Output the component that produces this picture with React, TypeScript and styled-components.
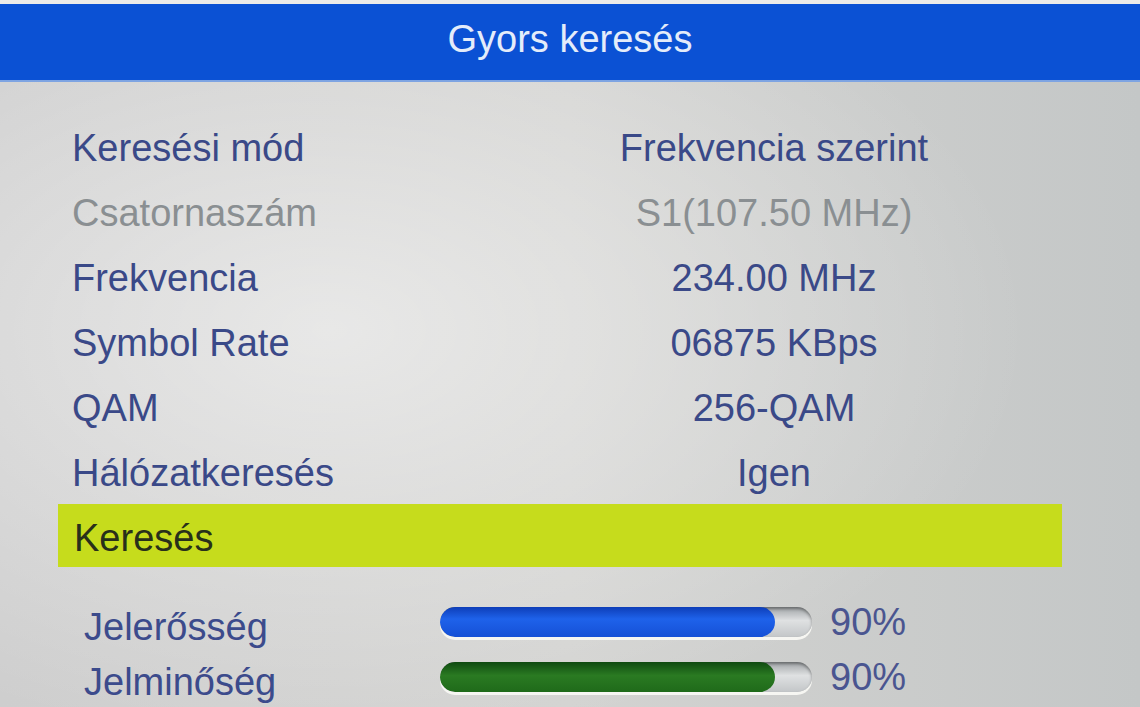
import React from 'react';
import styled, { createGlobalStyle } from 'styled-components';

interface Setting {
    label: string;
    value: string;
    disabled?: boolean;
}

interface Signal {
    label: string;
    percent: number;
    color: 'blue' | 'green';
}

const settings: Setting[] = [
    { label: 'Keresési mód', value: 'Frekvencia szerint' },
    { label: 'Csatornaszám', value: 'S1(107.50 MHz)', disabled: true },
    { label: 'Frekvencia', value: '234.00 MHz' },
    { label: 'Symbol Rate', value: '06875 KBps' },
    { label: 'QAM', value: '256-QAM' },
    { label: 'Hálózatkeresés', value: 'Igen' },
];

const signals: Signal[] = [
    { label: 'Jelerősség', percent: 90, color: 'blue' },
    { label: 'Jelminőség', percent: 90, color: 'green' },
];

const GlobalStyle = createGlobalStyle`
    html, body {
        margin: 0;
        padding: 0;
        background: #d6d6d4;
    }
    body {
        font-family: "Liberation Sans", Arial, sans-serif;
    }
`

export default function App() {
    return (
        <>
            <GlobalStyle />
            <Screen>
                <Header>Gyors keresés</Header>
                <Menu>
                    {settings.map(s => (
                        <Row key={s.label} disabled={s.disabled}>
                            <Label>{s.label}</Label>
                            <Value>{s.value}</Value>
                        </Row>
                    ))}
                    <ActionRow>Keresés</ActionRow>
                </Menu>
                <Signals>
                    {signals.map(sig => (
                        <SignalRow key={sig.label}>
                            <SignalLabel>{sig.label}</SignalLabel>
                            <Track>
                                <Fill color={sig.color} style={{ width: `${sig.percent}%` }} />
                            </Track>
                            <Percent>{sig.percent}%</Percent>
                        </SignalRow>
                    ))}
                </Signals>
            </Screen>
        </>
    );
}

const Screen = styled.div`
    width: 1140px;
    height: 707px;
    overflow: hidden;
    padding-top: 4px;
    box-sizing: border-box;
    background:
        radial-gradient(ellipse 700px 420px at 330px 330px, rgba(255, 255, 255, 0.5), rgba(255, 255, 255, 0) 100%),
        linear-gradient(90deg, #cecece 0%, #d3d3d1 50%, #c4c7c7 100%);
    display: flex;
    flex-direction: column;
    box-shadow: inset 0 4px 0 #ecebe9;
`

const Header = styled.div`
    height: 78px;
    background: #0b51d4;
    border-bottom: 2px solid #7ea4e2;
    box-sizing: border-box;
    display: flex;
    align-items: center;
    justify-content: center;
    color: #e4ecfa;
    font-size: 38px;
    padding-bottom: 6px;
`

const Menu = styled.div`
    display: flex;
    flex-direction: column;
    padding: 34px 78px 0 58px;
`

const Row = styled.div<{ disabled?: boolean }>`
    height: 65px;
    display: grid;
    grid-template-columns: 428px 1fr;
    align-items: center;
    font-size: 38px;
    color: ${p => (p.disabled ? '#8a8f92' : '#3a4988')};
`

const Label = styled.div`
    padding-left: 14px;
    white-space: nowrap;
`

const Value = styled.div`
    text-align: center;
    white-space: nowrap;
`

const ActionRow = styled.div`
    height: 63px;
    margin-top: -2px;
    background: #c6dc1c;
    display: flex;
    align-items: center;
    padding-left: 16px;
    padding-top: 6px;
    box-sizing: border-box;
    font-size: 38px;
    color: #28301a;
`

const Signals = styled.div`
    display: flex;
    flex-direction: column;
    padding: 40px 0 0 84px;
    gap: 25px;
`

const SignalRow = styled.div`
    display: flex;
    align-items: center;
    height: 30px;
`

const SignalLabel = styled.div`
    width: 356px;
    font-size: 38px;
    color: #3c4b8c;
    padding-top: 10px;
`

const Track = styled.div`
    width: 372px;
    height: 30px;
    border-radius: 15px;
    background: linear-gradient(180deg, #9fa3a6 0%, #dfe1e2 45%, #c3c6c8 100%);
    box-shadow: 0 3px 0 #f6f6f2, inset 0 2px 3px rgba(0, 0, 0, 0.35);
    overflow: hidden;
`

const Fill = styled.div<{ color: 'blue' | 'green' }>`
    height: 100%;
    border-radius: 15px;
    background: ${p =>
        p.color === 'blue'
            ? 'linear-gradient(180deg, #0e3eb8 0%, #1e62ea 40%, #1550d6 100%)'
            : 'linear-gradient(180deg, #0f4a10 0%, #2a7a22 45%, #1f6a1a 100%)'};
`

const Percent = styled.div`
    margin-left: 18px;
    font-size: 38px;
    color: #4a5590;
`
